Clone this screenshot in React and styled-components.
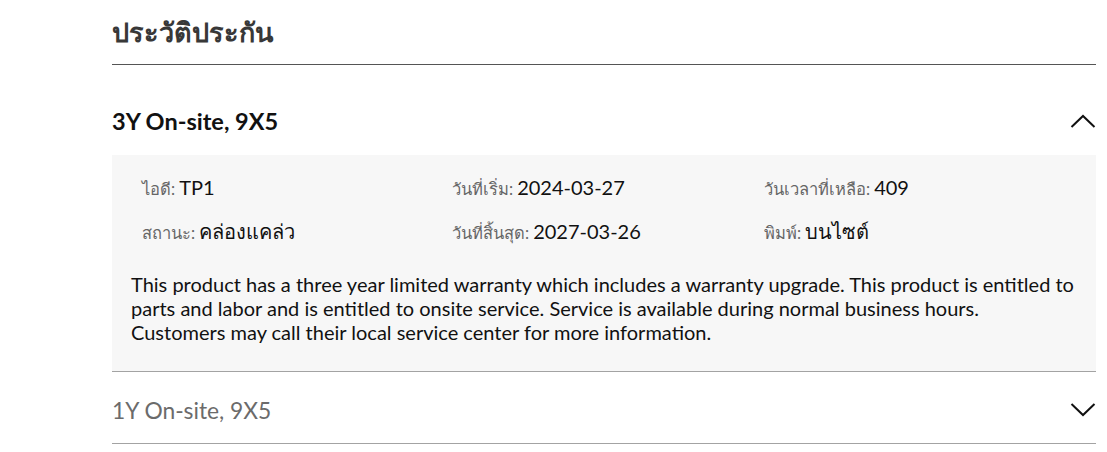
import React from "react";
import styled, { createGlobalStyle } from "styled-components";

const Global = createGlobalStyle`
  html, body { margin: 0; padding: 0; background: #fff; }
  body { font-family: Lato, "Noto Sans", "DejaVu Sans", sans-serif; color: #111; }
`;

const Page = styled.div`
  width: 984px;
  margin-left: 112px;
`;

const Title = styled.h2`
  margin: 0;
  padding: 14px 0 14px;
  font-size: 27px;
  line-height: 36px;
  font-weight: 700;
  color: #383838;
  border-bottom: 1px solid #555;
`;

const Item = styled.section`
  border-bottom: ${(p) => (p.$open ? "none" : "1px solid #a3a3a3")};
  margin-top: ${(p) => (p.$first ? "22px" : "0")};
`;

const Header = styled.div`
  box-sizing: border-box;
  height: ${(p) => (p.$open ? "68px" : "71px")};
  padding-top: ${(p) => (p.$open ? "0" : "4px")};
  display: flex;
  align-items: center;
  justify-content: space-between;
`;

const HeaderTitle = styled.h3`
  margin: 0;
  font-size: ${(p) => (p.$open ? "23.5px" : "22.8px")};
  font-weight: ${(p) => (p.$open ? 700 : 400)};
  color: ${(p) => (p.$open ? "#111" : "#6b6b6b")};
`;

const Chevron = styled.svg`
  width: 26px;
  height: 14px;
  display: block;
`;

const Panel = styled.div`
  background: #f7f7f7;
  padding: 19px 19px 27px;
  border-bottom: 1px solid #a3a3a3;
`;

const Grid = styled.div`
  display: grid;
  grid-template-columns: 310px 312px 1fr;
  grid-auto-rows: 26px;
  row-gap: 18px;
  margin-left: 11px;
`;

const Field = styled.div`
  display: flex;
  align-items: baseline;
  gap: 4px;
  height: 26px;
  line-height: 26px;
  white-space: nowrap;
`;

const Label = styled.span`
  font-size: 16.5px;
  color: #666;
`;

const Value = styled.span`
  font-size: 20px;
  color: #111;
`;

const Desc = styled.p`
  margin: 28px 0 0;
  font-size: 20px;
  line-height: 24px;
  color: #111;
`;

const ChevronIcon = ({ up }) => (
  <Chevron viewBox="0 0 26 14" fill="none">
    <path
      d={up ? "M1.5 13 L13 2 L24.5 13" : "M1.5 1 L13 12 L24.5 1"}
      stroke="#111"
      strokeWidth="2"
    />
  </Chevron>
);

const fields = [
  ["ไอดี", "TP1"],
  ["วันที่เริ่ม", "2024-03-27"],
  ["วันเวลาที่เหลือ", "409"],
  ["สถานะ", "คล่องแคล่ว"],
  ["วันที่สิ้นสุด", "2027-03-26"],
  ["พิมพ์", "บนไซต์"],
];

export default function App() {
  return (
    <>
      <Global />
      <Page>
        <Title>ประวัติประกัน</Title>
        <Item $open $first>
          <Header $open>
            <HeaderTitle $open>3Y On-site, 9X5</HeaderTitle>
            <ChevronIcon up />
          </Header>
          <Panel>
            <Grid>
              {fields.map(([l, v]) => (
                <Field key={l}>
                  <Label>{l}:</Label>
                  <Value>{v}</Value>
                </Field>
              ))}
            </Grid>
            <Desc>
              This product has a three year limited warranty which includes a
              warranty upgrade. This product is entitled to parts and labor and
              is entitled to onsite service. Service is available during normal
              business hours. Customers may call their local service center for
              more information.
            </Desc>
          </Panel>
        </Item>
        <Item>
          <Header>
            <HeaderTitle>1Y On-site, 9X5</HeaderTitle>
            <ChevronIcon />
          </Header>
        </Item>
      </Page>
    </>
  );
}
